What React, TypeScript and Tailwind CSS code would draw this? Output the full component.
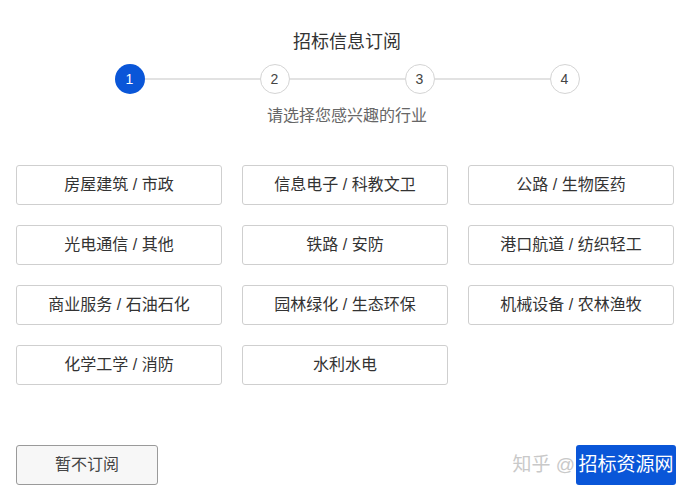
const INDUSTRIES = [
  "房屋建筑 / 市政",
  "信息电子 / 科教文卫",
  "公路 / 生物医药",
  "光电通信 / 其他",
  "铁路 / 安防",
  "港口航道 / 纺织轻工",
  "商业服务 / 石油石化",
  "园林绿化 / 生态环保",
  "机械设备 / 农林渔牧",
  "化学工学 / 消防",
  "水利水电",
];

function Step({ n, active }: { n: number; active?: boolean }) {
  return (
    <div
      className={
        active
          ? "flex h-[30px] w-[30px] shrink-0 items-center justify-center rounded-full bg-[#0a56d8] text-[14px] text-white"
          : "flex h-[30px] w-[30px] shrink-0 items-center justify-center rounded-full border border-[#d4d4d4] bg-white text-[14px] text-[#444]"
      }
    >
      {n}
    </div>
  );
}

export default function App() {
  return (
    <div
      className="relative h-[494px] w-[694px] bg-white"
      style={{ fontFamily: '"Liberation Sans", "Noto Sans CJK SC", sans-serif' }}
    >
      <div className="pt-[30px] text-center text-[18px] leading-[25px] text-[#333]">招标信息订阅</div>
      <div className="mx-auto mt-[9px] flex w-[465px] items-center">
        <Step n={1} active />
        <div className="h-[2px] flex-1 bg-[#e2e2e2]" />
        <Step n={2} />
        <div className="h-[2px] flex-1 bg-[#e2e2e2]" />
        <Step n={3} />
        <div className="h-[2px] flex-1 bg-[#e2e2e2]" />
        <Step n={4} />
      </div>
      <div className="mt-[11px] text-center text-[16px] leading-[22px] text-[#666]">请选择您感兴趣的行业</div>
      <div className="mx-[16px] mt-[38px] grid grid-cols-3 gap-x-[20px] gap-y-[20px] pr-[4px]">
        {INDUSTRIES.map((name) => (
          <div
            key={name}
            className="flex h-[40px] items-center justify-center rounded-[3px] border border-[#cfcfcf] text-[16px] text-[#333]"
          >
            {name}
          </div>
        ))}
      </div>
      <div className="absolute bottom-[9px] left-[16px] right-[18px] flex items-center justify-between">
        <div className="flex h-[40px] w-[142px] items-center justify-center rounded-[3px] border border-[#9a9a9a] bg-[#f7f7f7] text-[16px] text-[#444]">
          暂不订阅
        </div>
        <div className="relative flex h-[40px] w-[100px] items-center justify-center rounded-[3px] bg-[#0a56d8] text-[19px] text-white">
          招标资源网
          <span className="absolute right-[101px] whitespace-nowrap text-[19px] text-[#c9c9c9]">知乎 @</span>
        </div>
      </div>
    </div>
  );
}
